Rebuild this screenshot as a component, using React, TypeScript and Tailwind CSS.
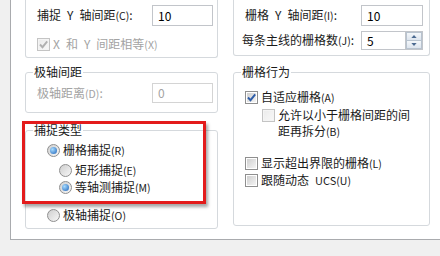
import React from 'react';

const ink = 'text-[#1a1a1a]';
const dim = 'text-[#a3a3a3]';

// access-key suffix like (C), drawn a little smaller as in the dialog
function Mn({ k }: { k: string }) {
  return <span className="text-[10.5px]">({k})</span>;
}

function Check({ checked = false, disabled = false }: { checked?: boolean; disabled?: boolean }) {
  return (
    <span
      className={`relative inline-block h-[13px] w-[13px] shrink-0 border ${
        disabled ? 'border-[#c4c4c4] bg-[#f4f4f4]' : 'border-[#8f8f8f] bg-white'
      }`}
    >
      <span
        className={`absolute inset-[1px] bg-gradient-to-br ${
          disabled ? 'from-[#ececec] to-[#f7f7f7]' : 'from-[#cfcfcf] to-[#f4f4f4]'
        }`}
      />
      {checked && (
        <svg viewBox="0 0 11 11" className="absolute inset-0 h-[11px] w-[11px]">
          <path
            d="M2 5.5 L4.5 8.2 L9.2 2.4"
            fill="none"
            stroke={disabled ? '#b0b0b0' : '#2d5ca8'}
            strokeWidth="1.9"
          />
        </svg>
      )}
    </span>
  );
}

function Radio({ checked = false }: { checked?: boolean }) {
  return (
    <span className="relative inline-flex h-[13px] w-[13px] shrink-0 items-center justify-center rounded-full border border-[#8f8f8f] bg-gradient-to-br from-[#cfcfcf] to-[#f7f7f7]">
      {checked && (
        <span className="h-[7px] w-[7px] rounded-full bg-[radial-gradient(circle_at_35%_35%,#a8dcff,#1d62b8)]" />
      )}
    </span>
  );
}

function TextBox({ value, disabled = false, w, h }: { value: string; disabled?: boolean; w: string; h: string }) {
  return (
    <div
      className={`${w} ${h} flex items-center border bg-white pl-[5px] text-[12px] ${
        disabled ? 'border-[#d4d4d4] text-[#a3a3a3]' : 'border-[#c2c5ca] text-black'
      }`}
    >
      {value}
    </div>
  );
}

function Spinner() {
  return (
    <div className="flex h-[19px] w-[17px] flex-col border border-[#c2c5ca] border-l-0 bg-white">
      <div className="flex flex-1 items-center justify-center border border-[#b8c3cf] bg-gradient-to-b from-[#f4f7fa] to-[#dde5ee]">
        <svg viewBox="0 0 7 4" className="h-[3px] w-[6px]">
          <path d="M0 4 L3.5 0 L7 4 Z" fill="#4b6a91" />
        </svg>
      </div>
      <div className="flex flex-1 items-center justify-center border border-t-0 border-[#b8c3cf] bg-gradient-to-b from-[#f4f7fa] to-[#dde5ee]">
        <svg viewBox="0 0 7 4" className="h-[3px] w-[6px]">
          <path d="M0 0 L3.5 4 L7 0 Z" fill="#4b6a91" />
        </svg>
      </div>
    </div>
  );
}

function Group({ title, className, children }: { title: string; className: string; children: React.ReactNode }) {
  return (
    <div className={`relative rounded-[3px] border border-[#d5d9dd] ${className}`}>
      <span className={`absolute -top-[9px] left-[7px] bg-white px-[1px] leading-[16px] ${ink}`}>{title}</span>
      {children}
    </div>
  );
}

export default function App() {
  return (
    <div className="relative h-[256px] w-[440px] overflow-hidden bg-[#f0f0f0] font-['Noto_Sans_CJK_SC','Liberation_Sans',sans-serif] text-[12px] leading-none">
      <div className="ml-[10px] flex h-[240px] border-b border-l border-[#a9abae] bg-white pl-[14px]">
        {/* left column */}
        <div className="flex w-[193px] flex-col">
          <div className="h-[58px] rounded-b-[3px] border border-t-0 border-[#d5d9dd]">
            <div className="mt-[5px] flex h-[21px] items-center pl-[11px]">
              <span className={`w-[115px] ${ink}`}>
                捕捉{'\u2002'}Y{'\u2002'}轴间距<Mn k="C" />:
              </span>
              <TextBox value="10" w="w-[61px]" h="h-[21px]" />
            </div>
            <div className="mt-[12px] flex items-center gap-[3px] pl-[11px]">
              <Check checked disabled />
              <span className={dim}>
                X{'\u2002'}和{'\u2002'}Y{'\u2002'}间距相等<Mn k="X" />
              </span>
            </div>
          </div>

          <Group title="极轴间距" className="mt-[14px] h-[41px]">
            <div className="mt-[10px] flex h-[20px] items-center pl-[11px]">
              <span className={`w-[115px] ${dim}`}>
                极轴距离<Mn k="D" />:
              </span>
              <TextBox value="0" disabled w="w-[61px]" h="h-[20px]" />
            </div>
          </Group>

          <Group title="捕捉类型" className="mt-[17px] h-[99px]">
            <div className="mt-[13px] flex h-[13px] items-center gap-[3px] pl-[21px]">
              <Radio checked />
              <span className={ink}>
                栅格捕捉<Mn k="R" />
              </span>
            </div>
            <div className="mt-[7px] flex h-[13px] items-center gap-[3px] pl-[33px]">
              <Radio />
              <span className={ink}>
                矩形捕捉<Mn k="E" />
              </span>
            </div>
            <div className="mt-[4px] flex h-[13px] items-center gap-[3px] pl-[33px]">
              <Radio checked />
              <span className={ink}>
                等轴测捕捉<Mn k="M" />
              </span>
            </div>
            <div className="mt-[15px] flex h-[13px] items-center gap-[3px] pl-[21px]">
              <Radio />
              <span className={ink}>
                极轴捕捉<Mn k="O" />
              </span>
            </div>
          </Group>
        </div>

        {/* right column */}
        <div className="ml-[15px] flex w-[197px] flex-col">
          <div className="h-[56px] rounded-b-[3px] border border-t-0 border-[#d5d9dd]">
            <div className="mt-[5px] flex h-[21px] items-center pl-[11px]">
              <span className={`w-[116px] ${ink}`}>
                栅格{'\u2002'}Y{'\u2002'}轴间距<Mn k="I" />:
              </span>
              <TextBox value="10" w="w-[62px]" h="h-[21px]" />
            </div>
            <div className="mt-[5px] flex h-[19px] items-center pl-[8px]">
              <span className={`w-[119px] ${ink}`}>
                每条主线的栅格数<Mn k="J" />:
              </span>
              <TextBox value="5" w="w-[45px]" h="h-[19px]" />
              <Spinner />
            </div>
          </div>

          <Group title="栅格行为" className="mt-[16px] h-[154px]">
            <div className="mt-[18px] flex h-[13px] items-center gap-[3px] pl-[11px]">
              <Check checked />
              <span className={ink}>
                自适应栅格<Mn k="A" />
              </span>
            </div>
            <div className="mt-[3px] flex items-start gap-[3px] pl-[28px]">
              <span className="mt-[2px]">
                <Check disabled />
              </span>
              <span className={`leading-[16px] ${ink}`}>
                允许以小于栅格间距的间
                <br />
                距再拆分<Mn k="B" />
              </span>
            </div>
            <div className="mt-[17px] flex h-[13px] items-center gap-[3px] pl-[11px]">
              <Check />
              <span className={ink}>
                显示超出界限的栅格<Mn k="L" />
              </span>
            </div>
            <div className="mt-[4px] flex h-[13px] items-center gap-[3px] pl-[11px]">
              <Check />
              <span className={ink}>
                跟随动态{'\u2002'}<span className="text-[11px]">UCS</span>
                <Mn k="U" />
              </span>
            </div>
          </Group>
        </div>
      </div>

      {/* red annotation frame */}
      <div className="absolute left-[22px] top-[121px] h-[83px] w-[184px] border-[3px] border-[#e31b1b] shadow-[2px_3px_3px_rgba(0,0,0,0.35)]" />
    </div>
  );
}
